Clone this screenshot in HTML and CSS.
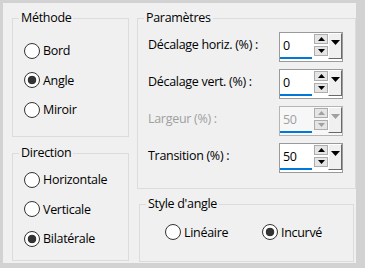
FILE: index.html
```html
<!DOCTYPE html>
<html lang="fr">
<head>
  <meta charset="UTF-8">
  <title>Angle</title>
  <link rel="stylesheet" href="styles.css">
</head>
<body>
  <div class="frame">
    <div class="panel">
      <div class="col">
        <div class="group method">
          <span class="legend">Méthode</span>
          <div class="radios">
            <label class="radio"><input type="radio" name="method">Bord</label>
            <label class="radio"><input type="radio" name="method" checked>Angle</label>
            <label class="radio"><input type="radio" name="method">Miroir</label>
          </div>
        </div>
        <div class="group direction">
          <span class="legend">Direction</span>
          <div class="radios">
            <label class="radio"><input type="radio" name="dir">Horizontale</label>
            <label class="radio"><input type="radio" name="dir">Verticale</label>
            <label class="radio"><input type="radio" name="dir" checked>Bilatérale</label>
          </div>
        </div>
      </div>
      <div class="col">
        <div class="group params">
          <span class="legend">Paramètres</span>
          <div class="rows">
            <div class="row">
              <span class="label">Décalage horiz. (%) :</span>
              <div class="spin">
                <span class="edit">0</span>
                <span class="arrows">
                  <span><svg width="7" height="4"><path d="M0 4h7L3.5 0z"/></svg></span>
                  <span><svg width="7" height="4"><path d="M0 0h7L3.5 4z"/></svg></span>
                </span>
                <span class="drop"><svg width="9" height="5"><path d="M0 0h9L4.5 5z"/></svg></span>
              </div>
            </div>
            <div class="row">
              <span class="label">Décalage vert. (%) :</span>
              <div class="spin">
                <span class="edit">0</span>
                <span class="arrows">
                  <span><svg width="7" height="4"><path d="M0 4h7L3.5 0z"/></svg></span>
                  <span><svg width="7" height="4"><path d="M0 0h7L3.5 4z"/></svg></span>
                </span>
                <span class="drop"><svg width="9" height="5"><path d="M0 0h9L4.5 5z"/></svg></span>
              </div>
            </div>
            <div class="row disabled">
              <span class="label">Largeur (%) :</span>
              <div class="spin">
                <span class="edit">50</span>
                <span class="arrows">
                  <span><svg width="7" height="4"><path d="M0 4h7L3.5 0z"/></svg></span>
                  <span><svg width="7" height="4"><path d="M0 0h7L3.5 4z"/></svg></span>
                </span>
                <span class="drop"><svg width="9" height="5"><path d="M0 0h9L4.5 5z"/></svg></span>
              </div>
            </div>
            <div class="row">
              <span class="label">Transition (%) :</span>
              <div class="spin">
                <span class="edit">50</span>
                <span class="arrows">
                  <span><svg width="7" height="4"><path d="M0 4h7L3.5 0z"/></svg></span>
                  <span><svg width="7" height="4"><path d="M0 0h7L3.5 4z"/></svg></span>
                </span>
                <span class="drop"><svg width="9" height="5"><path d="M0 0h9L4.5 5z"/></svg></span>
              </div>
            </div>
          </div>
        </div>
        <div class="group style">
          <span class="legend">Style d'angle</span>
          <div class="choices">
            <label class="radio first"><input type="radio" name="style">Linéaire</label>
            <label class="radio"><input type="radio" name="style" checked>Incurvé</label>
          </div>
        </div>
      </div>
    </div>
  </div>
</body>
</html>
```

FILE: styles.css
```css
body {
  margin: 0;
  background: #d2d2d2;
  font-family: "Open Sans", sans-serif;
  font-size: 12.5px;
  letter-spacing: -0.3px;
  color: #000;
}

.frame {
  padding: 3px 9px 5px 3px;
}

.panel {
  height: 260px;
  box-sizing: border-box;
  background: #f0f0f0;
  padding: 15px 0 0 9px;
  display: grid;
  grid-template-columns: 117px 219px;
  column-gap: 8px;
  align-items: start;
}

.col {
  display: flex;
  flex-direction: column;
  align-items: flex-start;
}

.group {
  border: 1px solid #dcdcdc;
  box-sizing: border-box;
}

.legend {
  display: block;
  width: max-content;
  margin: -9px 0 0 6px;
  padding: 0 2px;
  line-height: 16px;
  background: #f0f0f0;
}

/* radio groups */
.method {
  width: 117px;
  height: 119px;
}

.direction {
  width: 117px;
  height: 108px;
  margin-top: 16px;
}

.radios {
  display: flex;
  flex-direction: column;
  padding-left: 11px;
  margin-top: 10px;
}

.direction .radios {
  margin-top: 4px;
}

.radio {
  display: flex;
  align-items: center;
  gap: 3px;
  height: 29.5px;
}

.radio input {
  appearance: none;
  width: 16px;
  height: 16px;
  margin: 0;
  border: 1px solid #333;
  border-radius: 50%;
  background: #fff;
}

.radio input:checked {
  background: radial-gradient(circle, #333 0 4px, #fff 4.6px);
}

/* parameters */
.params {
  width: 219px;
  height: 171px;
}

.rows {
  display: flex;
  flex-direction: column;
  gap: 7px;
  margin-top: 6px;
  padding: 0 12px 0 10px;
}

.row {
  display: flex;
  justify-content: space-between;
  align-items: center;
  height: 30px;
}

.row .label {
  margin-bottom: 6px;
}

.spin {
  width: 64px;
  height: 30px;
  box-sizing: border-box;
  border: 1px solid #9a9a9a;
  background: #fff;
  display: flex;
}

.edit {
  width: 32px;
  height: 26px;
  box-sizing: border-box;
  border-bottom: 2px solid #0078d7;
  padding-left: 3px;
  display: flex;
  align-items: center;
}

.arrows {
  display: flex;
  flex-direction: column;
  gap: 2px;
  width: 14px;
  margin: 1px 0 0 2px;
}

.arrows span {
  height: 10px;
  box-sizing: border-box;
  border: 1px solid #adadad;
  background: #e5e5e5;
  display: flex;
  align-items: center;
  justify-content: center;
}

.drop {
  width: 14px;
  height: 26px;
  box-sizing: border-box;
  background: #f0f0f0;
  border-top: 1px solid #fff;
  border-left: 1px solid #fff;
  border-right: 1px solid #696969;
  border-bottom: 1px solid #696969;
  display: flex;
  justify-content: center;
  padding-top: 6px;
}

svg {
  display: block;
  fill: #000;
}

.disabled .label,
.disabled .edit {
  color: #a0a0a0;
}

.disabled .spin {
  background: #f7f7f7;
  border-color: #b5b5b5;
}

.disabled svg {
  fill: #a0a0a0;
}

/* angle style */
.style {
  width: 215px;
  height: 58px;
  margin: 15px 0 0 2px;
}

.choices {
  display: flex;
  padding-left: 25px;
  margin-top: 5px;
}

.choices .radio {
  height: 30px;
}

.choices .first {
  width: 97px;
}
```
